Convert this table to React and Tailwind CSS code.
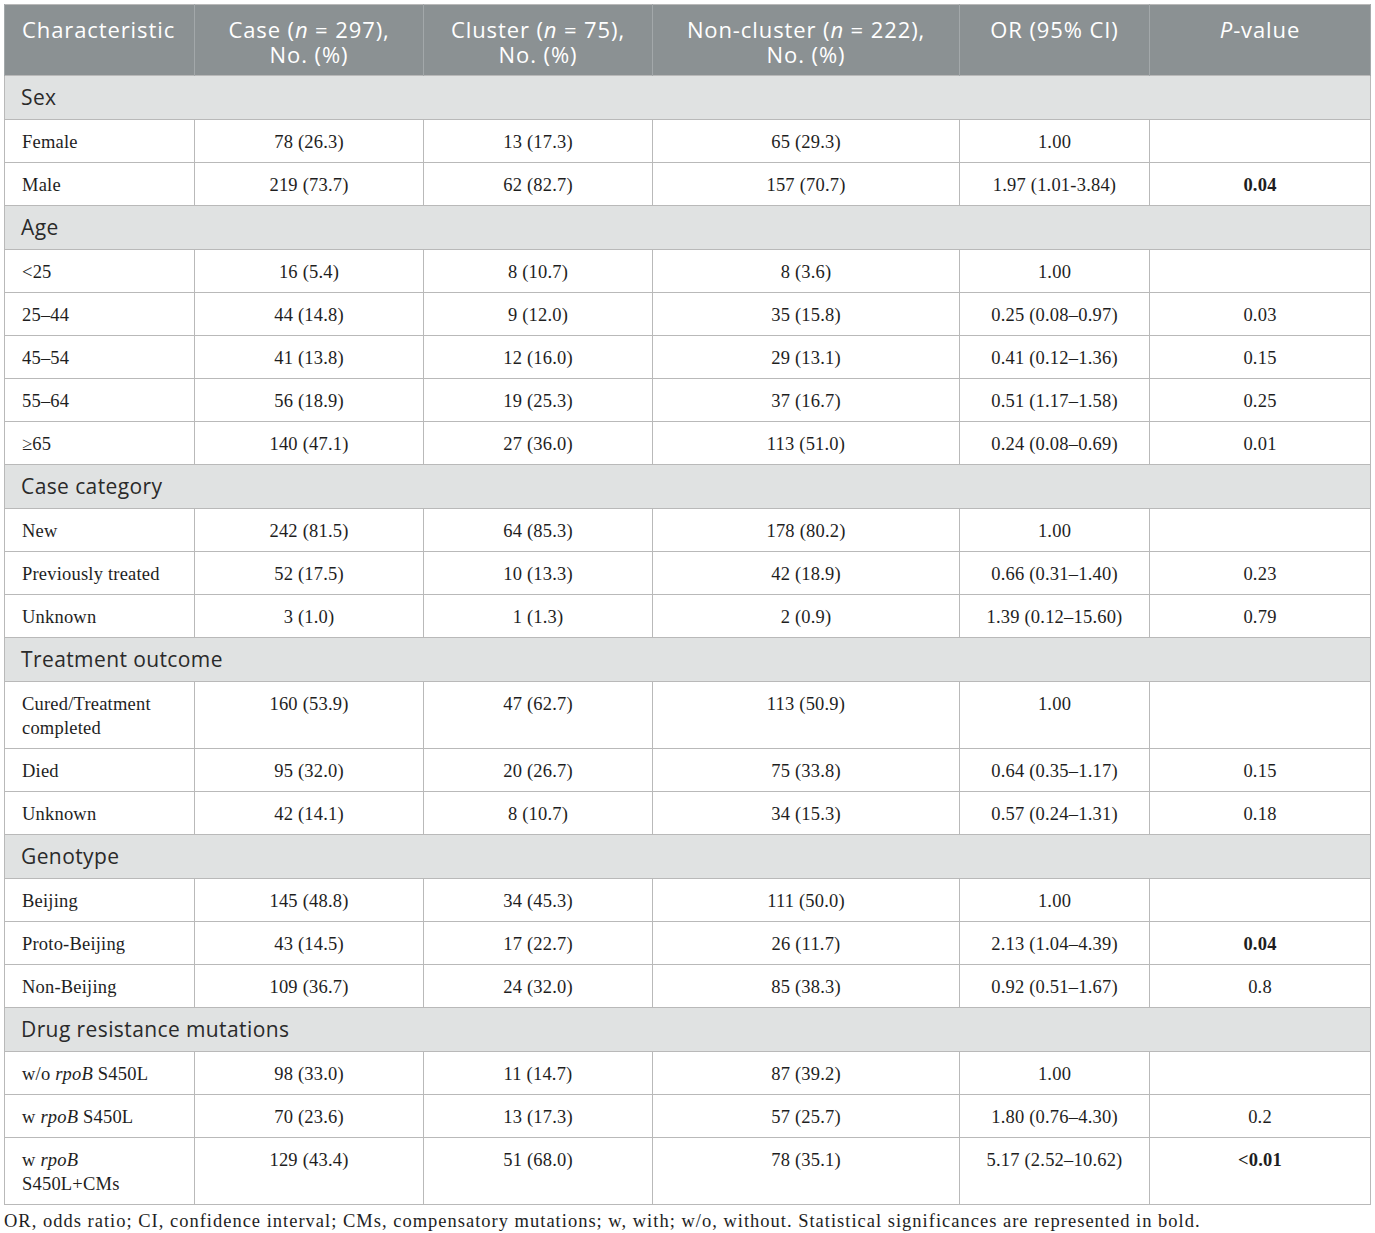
const sections = [
  {
    title: "Sex",
    rows: [
      ["Female", "78 (26.3)", "13 (17.3)", "65 (29.3)", "1.00", ""],
      ["Male", "219 (73.7)", "62 (82.7)", "157 (70.7)", "1.97 (1.01-3.84)", "0.04", true],
    ],
  },
  {
    title: "Age",
    rows: [
      ["<25", "16 (5.4)", "8 (10.7)", "8 (3.6)", "1.00", ""],
      ["25–44", "44 (14.8)", "9 (12.0)", "35 (15.8)", "0.25 (0.08–0.97)", "0.03"],
      ["45–54", "41 (13.8)", "12 (16.0)", "29 (13.1)", "0.41 (0.12–1.36)", "0.15"],
      ["55–64", "56 (18.9)", "19 (25.3)", "37 (16.7)", "0.51 (1.17–1.58)", "0.25"],
      ["≥65", "140 (47.1)", "27 (36.0)", "113 (51.0)", "0.24 (0.08–0.69)", "0.01"],
    ],
  },
  {
    title: "Case category",
    rows: [
      ["New", "242 (81.5)", "64 (85.3)", "178 (80.2)", "1.00", ""],
      ["Previously treated", "52 (17.5)", "10 (13.3)", "42 (18.9)", "0.66 (0.31–1.40)", "0.23"],
      ["Unknown", "3 (1.0)", "1 (1.3)", "2 (0.9)", "1.39 (0.12–15.60)", "0.79"],
    ],
  },
  {
    title: "Treatment outcome",
    rows: [
      [<>Cured/Treatment<br />completed</>, "160 (53.9)", "47 (62.7)", "113 (50.9)", "1.00", ""],
      ["Died", "95 (32.0)", "20 (26.7)", "75 (33.8)", "0.64 (0.35–1.17)", "0.15"],
      ["Unknown", "42 (14.1)", "8 (10.7)", "34 (15.3)", "0.57 (0.24–1.31)", "0.18"],
    ],
  },
  {
    title: "Genotype",
    rows: [
      ["Beijing", "145 (48.8)", "34 (45.3)", "111 (50.0)", "1.00", ""],
      ["Proto-Beijing", "43 (14.5)", "17 (22.7)", "26 (11.7)", "2.13 (1.04–4.39)", "0.04", true],
      ["Non-Beijing", "109 (36.7)", "24 (32.0)", "85 (38.3)", "0.92 (0.51–1.67)", "0.8"],
    ],
  },
  {
    title: "Drug resistance mutations",
    rows: [
      [<>w/o <i>rpoB</i> S450L</>, "98 (33.0)", "11 (14.7)", "87 (39.2)", "1.00", ""],
      [<>w <i>rpoB</i> S450L</>, "70 (23.6)", "13 (17.3)", "57 (25.7)", "1.80 (0.76–4.30)", "0.2"],
      [<>w <i>rpoB</i><br />S450L+CMs</>, "129 (43.4)", "51 (68.0)", "78 (35.1)", "5.17 (2.52–10.62)", "<0.01", true],
    ],
  },
];

const headers = [
  "Characteristic",
  <>Case (<i>n</i> = 297),<br />No. (%)</>,
  <>Cluster (<i>n</i> = 75),<br />No. (%)</>,
  <>Non-cluster (<i>n</i> = 222),<br />No. (%)</>,
  "OR (95% CI)",
  <><i>P</i>-value</>,
];

const sans = "font-['Open_Sans',sans-serif]";
const serif = "font-['Liberation_Serif',serif]";

export default function App() {
  return (
    <div className="bg-white min-h-[1233px] pt-1 pl-1">
      <table className="table-fixed border-collapse w-[1366px] border border-[#b9b9b9]">
        <colgroup>
          <col className="w-[190px]" />
          <col className="w-[229px]" />
          <col className="w-[229px]" />
          <col className="w-[307px]" />
          <col className="w-[190px]" />
          <col className="w-[221px]" />
        </colgroup>
        <thead>
          <tr className="bg-[#8b9193] h-[71px]">
            {headers.map((h, i) => (
              <th
                key={i}
                className={`${sans} font-normal text-white text-[22px] tracking-[0.9px] leading-[25px] align-top pt-[12px] pb-[8px] border-x border-[#a3a8aa] ${
                  i === 0 ? "text-left pl-[17px]" : "text-center"
                }`}
              >
                {h}
              </th>
            ))}
          </tr>
        </thead>
        <tbody>
          {sections.map((s) => (
            <>
              <tr key={s.title} className="bg-[#e0e2e2] h-[44px]">
                <td
                  colSpan={6}
                  className={`${sans} text-[21px] tracking-[0.4px] text-[#2a2a2a] pl-[16px] border border-[#b9b9b9]`}
                >
                  {s.title}
                </td>
              </tr>
              {s.rows.map((r, ri) => (
                <tr key={s.title + ri} className="h-[43px]">
                  {r.slice(0, 6).map((c, ci) => (
                    <td
                      key={ci}
                      className={`${serif} text-[18.5px] tracking-[0.2px] leading-[24px] text-[#1e1e1e] align-top pt-[10px] pb-[8px] border border-[#b9b9b9] ${
                        ci === 0 ? "text-left pl-[17px]" : "text-center"
                      } ${ci === 5 && r[6] ? "font-bold" : ""}`}
                    >
                      {c}
                    </td>
                  ))}
                </tr>
              ))}
            </>
          ))}
        </tbody>
      </table>
      <p className={`${serif} text-[18.5px] tracking-[1px] leading-[24px] text-[#1e1e1e] mt-[4px]`}>
        OR, odds ratio; CI, confidence interval; CMs, compensatory mutations; w, with; w/o, without. Statistical significances are represented in bold.
      </p>
    </div>
  );
}
